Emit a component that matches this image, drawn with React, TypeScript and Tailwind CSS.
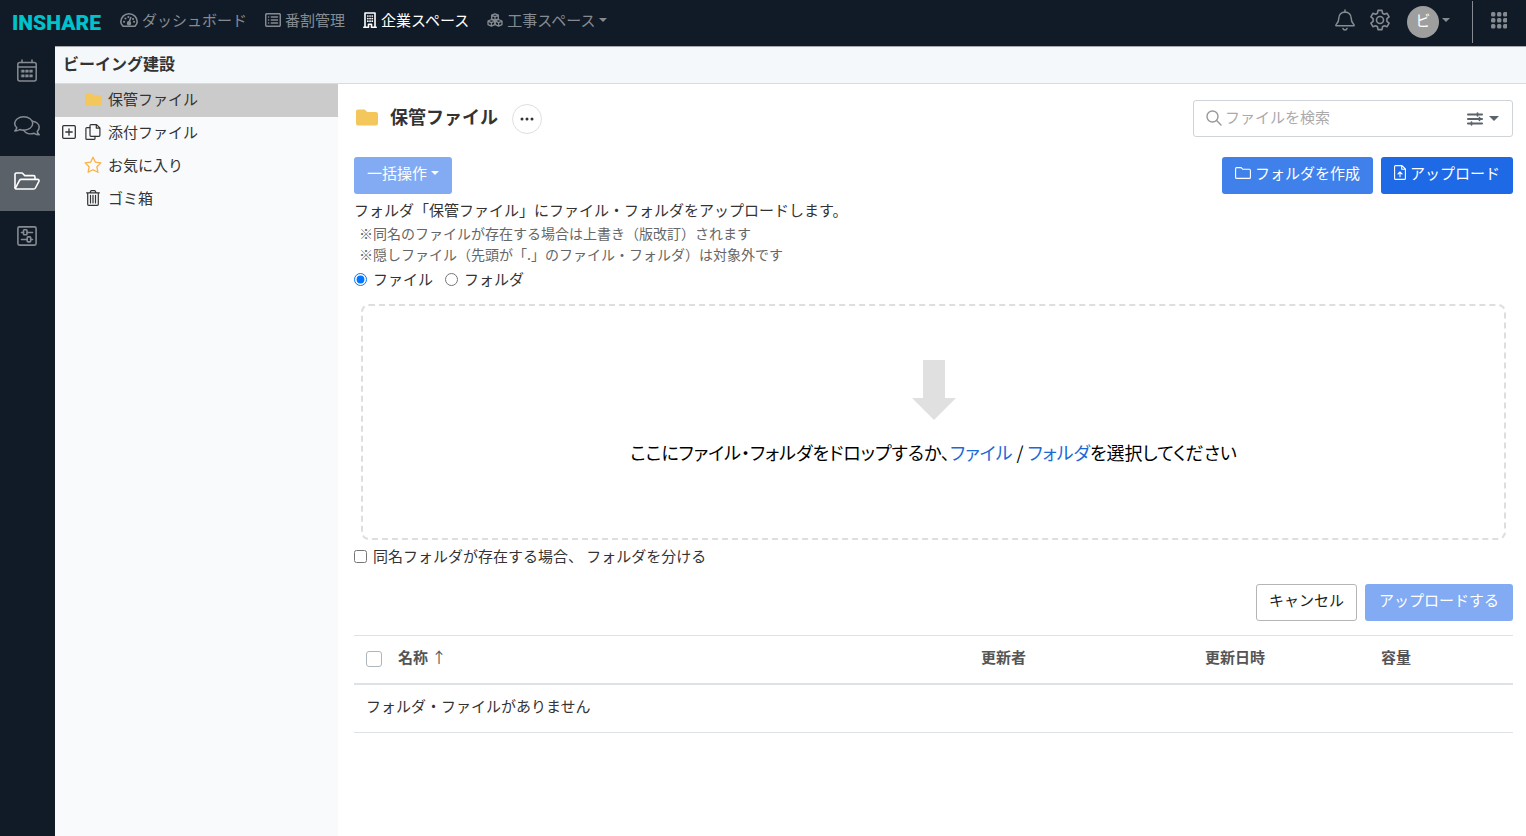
import { useState } from "react";
import type { ReactNode } from "react";
import clsx from "clsx";

type IconProps = { className?: string };

function Caret({ className = "h-1 w-2" }: IconProps) {
  return (
    <svg viewBox="0 0 8 4" className={clsx("shrink-0", className)} fill="currentColor" aria-hidden="true">
      <path d="M0 0h8L4 4z" />
    </svg>
  );
}

function LineIcon({
  className,
  viewBox = "0 0 24 24",
  strokeWidth = 1.5,
  children,
}: IconProps & { viewBox?: string; strokeWidth?: number; children: ReactNode }) {
  return (
    <svg
      viewBox={viewBox}
      className={clsx("shrink-0", className)}
      fill="none"
      stroke="currentColor"
      strokeWidth={strokeWidth}
      strokeLinecap="round"
      strokeLinejoin="round"
      aria-hidden="true"
    >
      {children}
    </svg>
  );
}

const GaugeIcon = () => (
  <LineIcon viewBox="0 0 18 14" strokeWidth={1.6} className="h-[14px] w-[18px]">
    <path d="M3 13.200h12c1.400-1.300 2.200-2.700 2.200-4.400A8.200 8 0 0 0 .8 8.800c0 1.700.8 3.100 2.200 4.400z" />
    <path d="M9.200 9l1.600-4.500" />
    <circle cx="9" cy="10.300" r="1.400" fill="currentColor" />
    <path d="M4 8.800h.1M5.400 5.400h.1M8.300 3.900h.1M13 6h.1M14 8.800h.1" strokeWidth={2} />
  </LineIcon>
);

const ListIcon = () => (
  <LineIcon viewBox="0 0 16 14" strokeWidth={1.5} className="h-[14px] w-4">
    <rect x=".7" y=".7" width="14.600" height="12.600" rx="1.300" />
    <path d="M3.500 4h.1M3.500 7h.1M3.500 10h.1M6.300 4h6.200M6.300 7h6.200M6.300 10h6.200" />
  </LineIcon>
);

const BuildingIcon = () => (
  <LineIcon viewBox="0 0 14 16" strokeWidth={1.6} className="h-4 w-[14px]">
    <path d="M.8 15.200h4.700v-3h3v3h4.700M2 15V1h10v14" />
    <path d="M4.800 4h.1M7 4h.1M9.200 4h.1M4.800 6.600h.1M7 6.600h.1M9.200 6.600h.1M4.800 9.200h.1M7 9.200h.1M9.200 9.200h.1" strokeWidth={1.700} />
  </LineIcon>
);

const CubesIcon = () => (
  <LineIcon viewBox="0 0 16 14" strokeWidth={1.300} className="h-[14px] w-4">
    <path d="M8 .8l3.300 1.400v3.600L8 7.300 4.700 5.800V2.200zM4.700 2.300L8 3.700l3.300-1.400M8 3.700v3.500" />
    <path d="M4.400 6.500l3.400 1.500v3.600l-3.400 1.600L1 11.600V8zM1 8.100l3.400 1.500 3.400-1.500M4.400 9.600v3.500" />
    <path d="M11.600 6.500L15 8v3.600l-3.400 1.600-3.400-1.600V8zM8.200 8.100l3.400 1.500L15 8.100M11.600 9.600v3.500" />
  </LineIcon>
);

const BellIcon = () => (
  <LineIcon viewBox="0 0 20 22" strokeWidth={1.500} className="h-[22px] w-5">
    <path d="M10 1v2.200M1.500 16.800h17c.6 0 .8-.7.4-1.100-1.500-1.500-2.700-2.600-2.700-6.500C16.200 5.700 13.600 3 10 3S3.800 5.700 3.800 9.200c0 3.900-1.200 5-2.700 6.500-.4.4-.2 1.100.4 1.100z" />
    <path d="M8 19.500c.3.900 1 1.400 2 1.400s1.700-.5 2-1.400" />
  </LineIcon>
);

const GearIcon = () => (
  <LineIcon viewBox="0 0 22 22" strokeWidth={1.600} className="h-[22px] w-[22px]">
    <circle cx="11" cy="11" r="3.500" />
    <path d="M9 1.400h4l.5 2.800 1.900 1.100 2.700-1 2 3.500-2.200 1.800v2.800l2.200 1.800-2 3.500-2.700-1-1.900 1.100-.5 2.800H9l-.5-2.800-1.900-1.100-2.700 1-2-3.500 2.200-1.800V9.600L1.900 7.800l2-3.500 2.700 1 1.900-1.100z" />
  </LineIcon>
);

const GridIcon = () => (
  <svg viewBox="0 0 16 17" className="h-[17px] w-4" fill="currentColor" aria-hidden="true">
    {[0, 6, 12].map((y) =>
      [0, 6, 12].map((x) => <rect key={`${x}-${y}`} x={x} y={y} width="4.400" height="4.400" rx="1.500" />)
    )}
  </svg>
);

const CalendarIcon = () => (
  <LineIcon viewBox="0 0 20 23" strokeWidth={1.500} className="h-[23px] w-5">
    <rect x=".8" y="3.500" width="18.400" height="18.500" rx="2" />
    <path d="M5 1v2.500M15 1v2.500M1 8h18" />
    <path
      d="M4.600 11h2.600v2.300H4.600zM8.700 11h2.600v2.300H8.700zM12.800 11h2.600v2.300h-2.600zM4.600 15.800h2.600v2.300H4.600zM8.700 15.800h2.600v2.300H8.700zM12.800 15.800h2.600v2.300h-2.600z"
      fill="currentColor"
      strokeWidth={0.500}
    />
  </LineIcon>
);

const CommentsIcon = () => (
  <LineIcon viewBox="0 0 26 20" strokeWidth={1.500} className="h-5 w-[26px]">
    <path d="M9.700.8c5 0 9 3 9 6.700s-4 6.700-9 6.700c-1.400 0-2.700-.2-3.900-.7-1.300.9-3 1.500-5 1.500 1-1 1.700-2.100 2-3.300C1.500 10.500.7 9 .7 7.500.7 3.800 4.700.8 9.700.8z" />
    <path d="M18.600 5.200c3.800.5 6.600 3 6.600 6.100 0 1.600-.8 3-2 4.200.3 1.200 1 2.300 2 3.300-2 0-3.700-.6-5-1.500-4.300 1.400-8.700.1-10.700-3.100" />
  </LineIcon>
);

const FolderOpenIcon = () => (
  <LineIcon viewBox="0 0 26 18" strokeWidth={1.600} className="h-[18px] w-[26px]">
    <path d="M1 15.500V2.500C1 1.600 1.600 1 2.500 1h5.700l2.600 2.600h8.700c.9 0 1.500.6 1.500 1.500v2.200" />
    <path d="M1.300 16.400l4.200-8c.3-.6.9-1 1.600-1h16.600c1 0 1.600 1 1.200 1.900l-3.500 6.700c-.3.600-.9 1-1.600 1H2c-.7 0-1.200-.8-.7-1.600z" />
  </LineIcon>
);

const BoardIcon = () => (
  <LineIcon viewBox="0 0 20 20" strokeWidth={1.600} className="h-5 w-5">
    <rect x=".9" y=".9" width="18.200" height="18.200" rx="1.500" />
    <path d="M4.500 6.500h2M10 6.500h5.500M4.500 13.500H10M13.800 13.500h1.700" />
    <rect x="6.500" y="3.800" width="3.500" height="5" rx=".8" />
    <rect x="10.200" y="10.900" width="3.500" height="5" rx=".8" />
  </LineIcon>
);

const FolderIcon = ({ className }: IconProps) => (
  <svg viewBox="0 0 22 17" className={clsx("shrink-0 text-[#f3c75c]", className)} fill="currentColor" aria-hidden="true">
    <path d="M2 .5h6.700l2.600 2.600H20c1.100 0 2 .9 2 2V14.500c0 1.100-.9 2-2 2H2c-1.100 0-2-.9-2-2v-12c0-1.100.9-2 2-2z" />
  </svg>
);

const CopyIcon = () => (
  <LineIcon viewBox="0 0 16 16" strokeWidth={1.200} className="h-4 w-4">
    <path d="M5 1.500C5 1 5.400.6 6 .6h5.500l3.400 3.300v7.400c0 .6-.4 1-1 1H6c-.6 0-1-.4-1-1zM11.300.8v3.300h3.400" />
    <path d="M5 3.600H1.900c-.6 0-1 .4-1 1v9.800c0 .6.4 1 1 1H9c.6 0 1-.4 1-1v-2" />
  </LineIcon>
);

const StarIcon = () => (
  <LineIcon viewBox="0 0 18 18" strokeWidth={1.300} className="h-[18px] w-[18px] text-[#fdb044]">
    <path d="M9 1.200l2.400 5 5.500.7-4 3.900 1 5.500L9 13.700l-4.900 2.600 1-5.500-4-3.900 5.500-.7z" />
  </LineIcon>
);

const TrashIcon = () => (
  <LineIcon viewBox="0 0 14 16" strokeWidth={1.200} className="h-4 w-[14px]">
    <path d="M.6 2.800h12.800M4 2.600L5 .7h4l1 1.900M1.700 3v11.300c0 .6.4 1 1 1h8.600c.6 0 1-.4 1-1V3M4.500 5.300v7.700M7 5.300v7.700M9.500 5.300v7.700" />
  </LineIcon>
);

const PlusBoxIcon = () => (
  <LineIcon viewBox="0 0 14 14" strokeWidth={1.300} className="h-[14px] w-[14px]">
    <rect x=".7" y=".7" width="12.600" height="12.600" rx="1" />
    <path d="M7 3.800v6.400M3.800 7h6.400" />
  </LineIcon>
);

const SearchIcon = () => (
  <LineIcon viewBox="0 0 16 16" strokeWidth={1.400} className="mb-[2px] h-4 w-4 text-[#999]">
    <circle cx="6.500" cy="6.500" r="5.500" />
    <path d="M10.600 10.600L15 15" />
  </LineIcon>
);

const SlidersIcon = () => (
  <LineIcon viewBox="0 0 16 14" strokeWidth={1.800} className="h-[14px] w-4">
    <path d="M.9 2.500h14.200M.9 7h14.200M.9 11.500h14.200M10.500 1.200v2.600M12.500 5.700v2.600M4.500 10.200v2.600" />
  </LineIcon>
);

const FolderLineIcon = () => (
  <LineIcon viewBox="0 0 16 12" strokeWidth={1.100} className="h-3 w-4">
    <path d="M1.600.6h4.600l1.700 1.700h6.500c.6 0 1 .4 1 1v7.100c0 .6-.4 1-1 1H1.600c-.6 0-1-.4-1-1V1.600c0-.6.4-1 1-1z" />
  </LineIcon>
);

const FileUploadIcon = () => (
  <LineIcon viewBox="0 0 12 15" strokeWidth={1.100} className="h-[15px] w-3">
    <path d="M1.600.6H8l3.400 3.400v9.400c0 .6-.4 1-1 1H1.600c-.6 0-1-.4-1-1V1.600c0-.6.4-1 1-1zM7.700.8v3.500h3.500M6 11.800V7M4 9l2-2 2 2" />
  </LineIcon>
);

const topNav = [
  { label: "ダッシュボード", icon: <GaugeIcon /> },
  { label: "番割管理", icon: <ListIcon /> },
  { label: "企業スペース", icon: <BuildingIcon />, active: true },
  { label: "工事スペース", icon: <CubesIcon />, menu: true },
];

const sideNav = [
  { label: "カレンダー", icon: <CalendarIcon /> },
  { label: "チャット", icon: <CommentsIcon /> },
  { label: "ファイル", icon: <FolderOpenIcon />, active: true },
  { label: "設備", icon: <BoardIcon /> },
];

const tree = [
  { label: "保管ファイル", icon: <FolderIcon className="h-[13px] w-[17px]" />, active: true },
  { label: "添付ファイル", icon: <CopyIcon />, expandable: true },
  { label: "お気に入り", icon: <StarIcon /> },
  { label: "ゴミ箱", icon: <TrashIcon /> },
];

function Header() {
  return (
    <header className="flex h-[46px] items-center bg-[#111b27] pr-[19px] pl-3 text-[#868b91]">
      <a href="#" className="w-[108px] font-[Roboto,sans-serif] text-[21px] leading-6 font-black text-[#00c2cb]">
        INSHARE
      </a>
      <nav className="flex gap-[18px] pb-[6px]">
        {topNav.map((item) => (
          <a
            key={item.label}
            href="#"
            className={clsx("flex items-center gap-1 whitespace-nowrap", item.active && "text-white")}
          >
            {item.icon}
            <span>{item.label}</span>
            {item.menu && <Caret />}
          </a>
        ))}
      </nav>
      <div className="ml-auto flex h-full items-center">
        <button type="button" aria-label="通知" className="mb-[6px]">
          <BellIcon />
        </button>
        <button type="button" aria-label="設定" className="mb-[6px] ml-[14px]">
          <GearIcon />
        </button>
        <button type="button" aria-label="アカウント" className="mb-[2px] ml-4 flex items-center gap-[3px]">
          <span className="flex h-8 w-8 items-center justify-center rounded-full bg-[#9e9e9e] pb-1 text-white">ビ</span>
          <Caret className="mb-1 h-1 w-2" />
        </button>
        <span className="mb-[2px] ml-[22px] h-[42px] w-px bg-[#868b91]" />
        <button type="button" aria-label="アプリ一覧" className="mb-[6px] ml-[18px]">
          <GridIcon />
        </button>
      </div>
    </header>
  );
}

function SideNav() {
  return (
    <nav className="w-[55px] shrink-0 bg-[#111b27] text-[#868b91]">
      {sideNav.map((item) => (
        <a
          key={item.label}
          href="#"
          aria-label={item.label}
          className={clsx("flex h-[55px] items-center justify-center pr-px pb-[6px]", item.active && "bg-[#5a6169] text-white")}
        >
          {item.icon}
        </a>
      ))}
    </nav>
  );
}

function FolderTree() {
  return (
    <aside className="w-[283px] shrink-0 bg-[#f8fafc]">
      {tree.map((item) => (
        <div key={item.label} className={clsx("flex h-[33px] items-center pb-[3px] pl-[7px]", item.active && "bg-[#cbcbcb]")}>
          <span className="flex w-[22px]">
            {item.expandable && (
              <button type="button" aria-label="展開">
                <PlusBoxIcon />
              </button>
            )}
          </span>
          <a href="#" className="flex items-center gap-[6px]">
            <span className="flex w-[18px] justify-center">{item.icon}</span>
            {item.label}
          </a>
        </div>
      ))}
    </aside>
  );
}

function UploadPanel() {
  const [kind, setKind] = useState("file");

  return (
    <section>
      <p className="mt-1 mb-px leading-6">フォルダ「保管ファイル」にファイル・フォルダをアップロードします。</p>
      <p className="pl-[5px] text-sm leading-[21px] text-[#666]">※同名のファイルが存在する場合は上書き（版改訂）されます</p>
      <p className="pl-[5px] text-sm leading-[21px] text-[#666]">※隠しファイル（先頭が「.」のファイル・フォルダ）は対象外です</p>
      <div className="mt-[2px] flex gap-3 leading-6">
        <label className="flex items-center gap-[6px]">
          <input type="radio" name="kind" checked={kind === "file"} onChange={() => setKind("file")} />
          ファイル
        </label>
        <label className="flex items-center gap-[6px]">
          <input type="radio" name="kind" checked={kind === "folder"} onChange={() => setKind("folder")} />
          フォルダ
        </label>
      </div>

      <div className="mx-[7px] mt-[13px] flex h-[236px] flex-col items-center justify-center gap-4 rounded-lg border-2 border-dashed border-[#dedede] pb-4">
        <svg viewBox="0 0 44 60" className="h-[60px] w-11" fill="#e0e0e0" aria-hidden="true">
          <path d="M11 0h22v38h11L22 60 0 38h11z" />
        </svg>
        <p className="text-lg leading-8 text-black [font-feature-settings:'palt']">
          ここにファイル・フォルダをドロップするか、
          <a href="#" className="text-[#1b69d6]">ファイル</a> / <a href="#" className="text-[#1b69d6]">フォルダ</a>
          を選択してください
        </p>
      </div>

      <label className="mt-1 flex items-center gap-[6px] leading-6">
        <input type="checkbox" />
        <span>同名フォルダが存在する場合、 フォルダを分ける</span>
      </label>

      <div className="mt-4 flex justify-end gap-2">
        <button type="button" className="h-[37px] rounded-[3px] border border-[#b5b5b5] bg-white px-3 pb-[6px] text-[#222]">
          キャンセル
        </button>
        <button type="button" className="h-[37px] rounded-[3px] bg-[#82abf3] px-[14px] pb-[6px] text-white">
          アップロードする
        </button>
      </div>
    </section>
  );
}

function FileTable() {
  return (
    <table className="mt-[14px] w-full table-fixed border-y border-[#dee2e6] text-left">
      <thead className="border-b-2 border-[#dee2e6] text-[#555]">
        <tr className="h-12">
          <th className="w-8 pl-3">
            <input
              type="checkbox"
              aria-label="すべて選択"
              className="block h-4 w-4 appearance-none rounded-[3px] border border-[#adb5bd] bg-white checked:bg-[#1d69e6]"
            />
          </th>
          <th className="px-3 pb-1">
            名称 <span className="font-normal">↑</span>
          </th>
          <th className="w-56 px-3 pb-1">更新者</th>
          <th className="w-44 px-3 pb-1">更新日時</th>
          <th className="w-36 px-3 pb-1">容量</th>
        </tr>
      </thead>
      <tbody>
        <tr className="h-[49px]">
          <td colSpan={5} className="px-3 pb-1">
            フォルダ・ファイルがありません
          </td>
        </tr>
      </tbody>
    </table>
  );
}

export default function App() {
  return (
    <div className="flex min-h-screen flex-col bg-white font-['Noto_Sans_CJK_JP',sans-serif] text-[15px] leading-6 text-[#333]">
      <Header />
      <div className="flex flex-1">
        <SideNav />
        <div className="flex min-w-0 flex-1 flex-col">
          <div className="flex h-[38px] items-center border-t border-b border-t-[#a5a8ac] border-b-[#d9dcdf] bg-[#f4f8fb] px-2 pb-1 text-base font-bold">
            ビーイング建設
          </div>
          <div className="flex flex-1">
            <FolderTree />
            <main className="min-w-0 flex-1 pt-4 pr-[13px] pb-8 pl-4">
              <div className="flex h-[37px] items-center">
                <FolderIcon className="mr-3 mb-[2px] ml-[2px] h-[17px] w-[22px]" />
                <h1 className="mb-[6px] text-lg font-bold">保管ファイル</h1>
                <button
                  type="button"
                  aria-label="メニュー"
                  className="ml-[14px] flex h-[30px] w-[30px] items-center justify-center rounded-full border border-[#dedfe3]"
                >
                  <svg viewBox="0 0 14 4" className="h-1 w-[14px]" fill="#333" aria-hidden="true">
                    <circle cx="2" cy="2" r="1.500" />
                    <circle cx="7" cy="2" r="1.500" />
                    <circle cx="12" cy="2" r="1.500" />
                  </svg>
                </button>
                <div className="ml-auto flex h-[37px] w-80 items-center rounded-[3px] border border-[#ced4da] pl-3 text-[#5b636b]">
                  <SearchIcon />
                  <input
                    type="text"
                    aria-label="ファイルを検索"
                    placeholder="ファイルを検索"
                    className="mb-1 ml-[3px] min-w-0 flex-1 outline-none placeholder:text-[#aaa]"
                  />
                  <button type="button" aria-label="検索条件" className="mr-[13px] flex items-center gap-[6px]">
                    <SlidersIcon />
                    <Caret className="h-[5px] w-[10px]" />
                  </button>
                </div>
              </div>

              <div className="mt-5 flex gap-2">
                <button
                  type="button"
                  className="mr-auto flex h-[37px] items-center gap-1 rounded-[3px] bg-[#82abf3] px-[13px] pb-[6px] text-white"
                >
                  一括操作
                  <Caret />
                </button>
                <button
                  type="button"
                  className="flex h-[37px] items-center gap-1 rounded-[3px] bg-[#4080eb] px-[13px] pb-[6px] text-white"
                >
                  <FolderLineIcon />
                  フォルダを作成
                </button>
                <button
                  type="button"
                  className="flex h-[37px] items-center gap-1 rounded-[3px] bg-[#1d69e6] px-[13px] pb-[6px] text-white"
                >
                  <FileUploadIcon />
                  アップロード
                </button>
              </div>

              <UploadPanel />
              <FileTable />
            </main>
          </div>
        </div>
      </div>
    </div>
  );
}
